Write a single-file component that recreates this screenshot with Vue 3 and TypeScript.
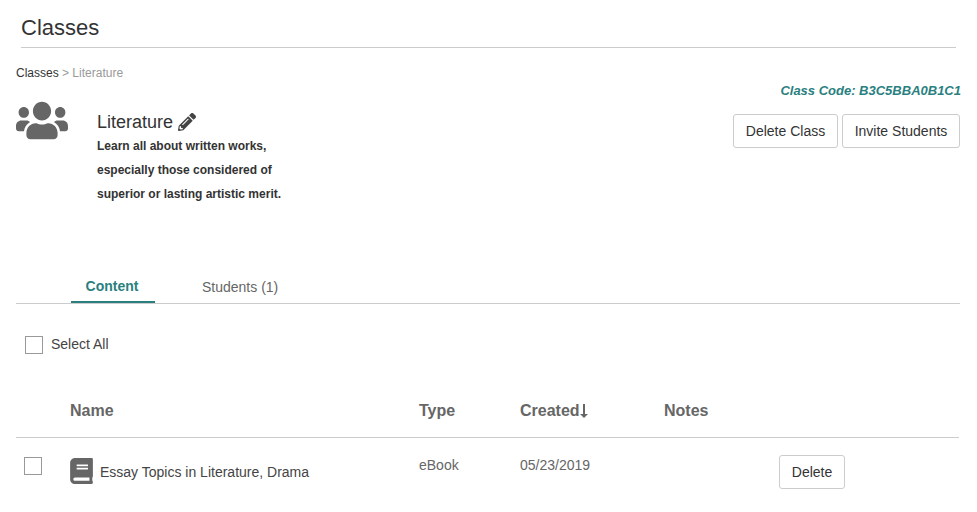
<template>
  <div class="page">
    <h1 class="page-title">Classes</h1>

    <div class="top">
      <div class="top-left">
        <div class="crumbs"><span class="crumb-link">Classes</span> &gt; Literature</div>
        <div class="class-info">
          <svg class="users-icon" viewBox="0 0 640 512" preserveAspectRatio="none" aria-hidden="true">
            <path d="M96 224c35.3 0 64-28.7 64-64s-28.7-64-64-64-64 28.7-64 64 28.7 64 64 64zm448 0c35.3 0 64-28.7 64-64s-28.7-64-64-64-64 28.7-64 64 28.7 64 64 64zm32 32h-64c-17.6 0-33.5 7.1-45.1 18.6 40.3 22.1 68.9 62 75.1 109.4h66c17.7 0 32-14.3 32-32v-32c0-35.3-28.7-64-64-64zm-256 0c61.9 0 112-50.1 112-112S381.9 32 320 32 208 82.1 208 144s50.1 112 112 112zm76.8 32h-8.3c-20.8 10-43.9 16-68.5 16s-47.6-6-68.5-16h-8.3C179.6 288 128 339.6 128 403.2V432c0 26.5 21.5 48 48 48h288c26.5 0 48-21.5 48-48v-28.8c0-63.6-51.6-115.2-115.2-115.2zm-223.7-13.4C161.5 263.1 145.6 256 128 256H64c-35.3 0-64 28.7-64 64v32c0 17.7 14.3 32 32 32h65.9c6.3-47.4 34.9-87.3 75.2-109.4z" />
          </svg>
          <div class="class-text">
            <div class="class-name">
              Literature
              <svg class="pencil-icon" viewBox="0 0 512 512" aria-hidden="true">
                <path d="M497.9 142.1l-46.1 46.1c-4.7 4.7-12.3 4.7-17 0l-111-111c-4.7-4.7-4.7-12.3 0-17l46.1-46.1c18.7-18.7 49.1-18.7 67.9 0l60.1 60.1c18.8 18.7 18.8 49.1 0 67.9zM284.2 99.8L21.6 362.4.4 483.9c-2.9 16.4 11.4 30.6 27.8 27.8l121.5-21.3 262.6-262.6c4.7-4.7 4.7-12.3 0-17l-111-111c-4.8-4.7-12.4-4.7-17.1 0zM124.1 339.9c-5.5-5.5-5.5-14.3 0-19.8l154-154c5.5-5.5 14.3-5.5 19.8 0s5.5 14.3 0 19.8l-154 154c-5.5 5.5-14.3 5.5-19.8 0zM88 424h48v36.3l-64.5 11.3-31.1-31.1L51.7 376H88v48z" />
              </svg>
            </div>
            <p class="class-desc">
              Learn all about written works,<br />
              especially those considered of<br />
              superior or lasting artistic merit.
            </p>
          </div>
        </div>
      </div>

      <div class="top-right">
        <div class="class-code">Class Code: {{ classCode }}</div>
        <div class="top-actions">
          <button class="btn btn-delete-class">Delete Class</button>
          <button class="btn btn-invite">Invite Students</button>
        </div>
      </div>
    </div>

    <div class="tabs">
      <div
        v-for="tab in tabs"
        :key="tab.id"
        :class="['tab', 'tab-' + tab.id, activeTab === tab.id ? 'active' : '']"
        @click="activeTab = tab.id"
      >
        {{ tab.label }}
      </div>
    </div>

    <label class="select-all">
      <span class="check"></span>
      Select All
    </label>

    <div class="grid grid-head">
      <span></span>
      <span>Name</span>
      <span>Type</span>
      <span>Created<svg class="sort-icon" viewBox="0 0 8 14" aria-hidden="true"><path d="M3 0h2v10h3l-4 4-4-4h3z" /></svg></span>
      <span>Notes</span>
      <span></span>
    </div>

    <div v-for="row in rows" :key="row.name" class="grid grid-row">
      <span class="check row-check"></span>
      <div class="row-name">
        <svg class="book-icon" viewBox="0 0 448 512" aria-hidden="true">
          <path d="M448 360V24c0-13.3-10.7-24-24-24H96C43 0 0 43 0 96v320c0 53 43 96 96 96h328c13.3 0 24-10.7 24-24v-16c0-7.5-3.5-14.3-8.9-18.7-4.2-15.4-4.2-59.3 0-74.7 5.4-4.3 8.9-11.1 8.9-18.6zM128 134c0-3.3 2.7-6 6-6h212c3.3 0 6 2.7 6 6v20c0 3.3-2.7 6-6 6H134c-3.3 0-6-2.7-6-6v-20zm0 64c0-3.3 2.7-6 6-6h212c3.3 0 6 2.7 6 6v20c0 3.3-2.7 6-6 6H134c-3.3 0-6-2.7-6-6v-20zm253.4 250H96c-17.7 0-32-14.3-32-32 0-17.6 14.4-32 32-32h285.4c-1.9 17.1-1.9 46.9 0 64z" />
        </svg>
        <span class="row-title">{{ row.name }}</span>
      </div>
      <span class="row-cell">{{ row.type }}</span>
      <span class="row-cell">{{ row.created }}</span>
      <span></span>
      <button class="btn btn-delete">Delete</button>
    </div>
  </div>
</template>

<script setup lang="ts">
import { ref } from "vue";

const classCode = "B3C5BBA0B1C1";
const activeTab = ref("content");

const tabs = [
  { id: "content", label: "Content" },
  { id: "students", label: "Students (1)" },
];

const rows = [
  { name: "Essay Topics in Literature, Drama", type: "eBook", created: "05/23/2019" },
];
</script>

<style>
html,
body {
  margin: 0;
  background: #fff;
}
</style>

<style scoped>
.page {
  padding: 0 17px 0 16px;
  font-family: "Liberation Sans", Arial, sans-serif;
  color: #333;
  font-size: 14px;
}

.page-title {
  margin: 0 4px 0 5px;
  height: 47px;
  line-height: 55px;
  font-size: 22px;
  font-weight: 400;
  color: #333;
  border-bottom: 1px solid #ccc;
}

.top {
  display: flex;
  justify-content: space-between;
  height: 207px;
}

.crumbs {
  margin-top: 18px;
  line-height: 14px;
  font-size: 12px;
  color: #999;
}

.crumb-link {
  color: #333;
}

.class-info {
  display: flex;
  margin-top: 19px;
}

.users-icon {
  width: 52px;
  height: 43px;
  fill: #666;
  flex: none;
}

.class-text {
  margin-left: 29px;
}

.class-name {
  display: flex;
  align-items: center;
  gap: 5px;
  margin-top: 12px;
  height: 22px;
  font-size: 18px;
  line-height: 22px;
  color: #333;
}

.pencil-icon {
  width: 18px;
  height: 18px;
  fill: #444;
}

.class-desc {
  margin: 1px 0 0;
  font-size: 12px;
  font-weight: 700;
  line-height: 24px;
  color: #333;
}

.top-right {
  display: flex;
  flex-direction: column;
  align-items: flex-end;
}

.class-code {
  margin-top: 35px;
  margin-right: -1px;
  font-size: 13px;
  line-height: 16px;
  font-weight: 700;
  font-style: italic;
  color: #2a7f7f;
}

.top-actions {
  display: flex;
  gap: 4px;
  margin-top: 15px;
}

.btn {
  height: 34px;
  padding: 0;
  border: 1px solid #ccc;
  border-radius: 3px;
  background: #fff;
  font-family: inherit;
  font-size: 14px;
  color: #333;
}

.btn-delete-class {
  width: 105px;
}

.btn-invite {
  width: 118px;
}

.tabs {
  display: flex;
  height: 48px;
  padding-left: 55px;
  border-bottom: 1px solid #ccc;
}

.tab {
  height: 48px;
  padding-top: 15px;
  box-sizing: border-box;
  line-height: 32px;
  font-size: 14px;
  color: #666;
  text-align: center;
}

.tab-content {
  width: 84px;
  padding-right: 2px;
}

.tab-students {
  width: 76px;
  margin-left: 47px;
  line-height: 34px;
  white-space: nowrap;
}

.tab.active {
  font-weight: 700;
  color: #2a7f7f;
  border-bottom: 2px solid #2a7f7f;
}

.select-all {
  display: flex;
  align-items: flex-start;
  gap: 8px;
  margin: 32px 0 0 9px;
  height: 18px;
  line-height: 16px;
  color: #444;
}

.check {
  display: block;
  box-sizing: border-box;
  width: 18px;
  height: 18px;
  border: 1px solid #999;
  background: #fff;
  flex: none;
}

.grid {
  display: grid;
  grid-template-columns: 54px 349px 101px 144px 115px 1fr;
  margin-right: 1px;
}

.grid-head {
  margin-top: 38px;
  height: 45px;
  line-height: 38px;
  font-size: 16px;
  font-weight: 700;
  color: #666;
  border-bottom: 1px solid #ccc;
}

.sort-icon {
  width: 8px;
  height: 14px;
  fill: #666;
  vertical-align: -2px;
}

.grid-row {
  height: 60px;
  padding-top: 17px;
  box-sizing: border-box;
  align-items: start;
}

.row-check {
  margin: 2px 0 0 8px;
}

.row-name {
  display: flex;
  align-items: center;
  gap: 7px;
  margin-top: 3px;
  white-space: nowrap;
  color: #444;
}

.row-title {
  padding-top: 2px;
}

.book-icon {
  width: 23px;
  height: 26px;
  fill: #666;
  flex: none;
}

.row-cell {
  color: #666;
  line-height: 20px;
}

.btn-delete {
  width: 66px;
}
</style>
